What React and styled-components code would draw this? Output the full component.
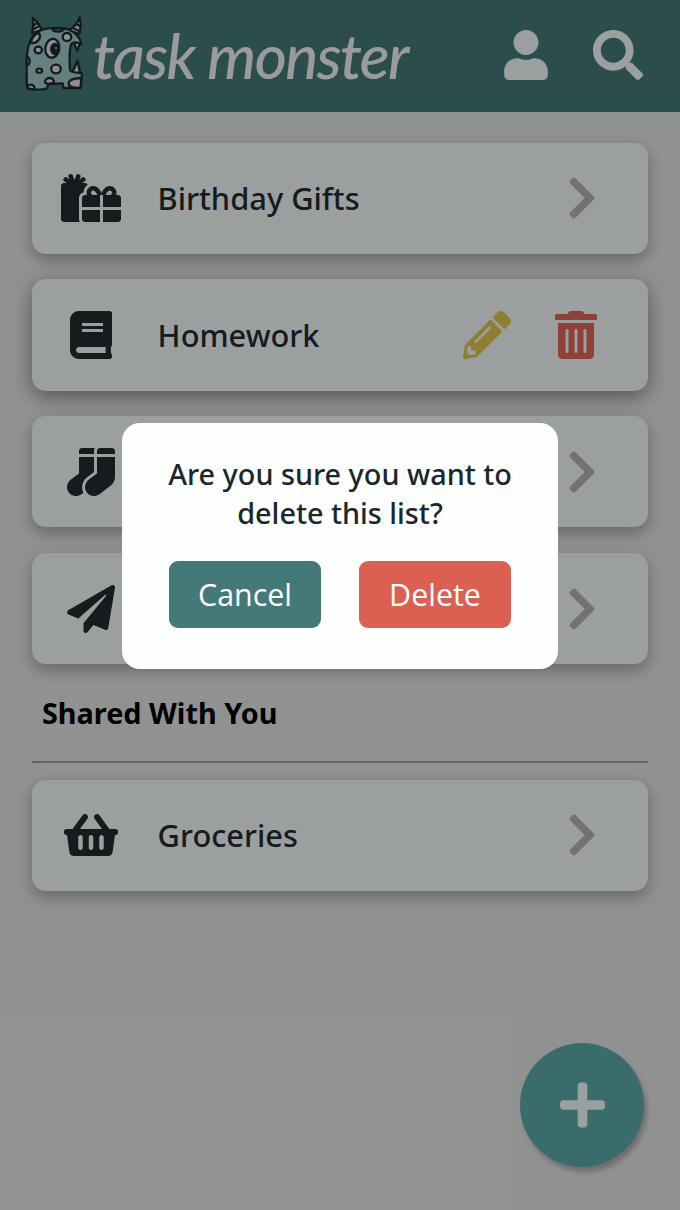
import React from "react";
import styled, { createGlobalStyle } from "styled-components";
import {
  FaUser, FaSearch, FaGifts, FaBook, FaSocks, FaPaperPlane,
  FaShoppingBasket, FaChevronRight, FaPencilAlt, FaTrashAlt, FaPlus,
} from "react-icons/fa";

const GlobalStyle = createGlobalStyle`
  * { box-sizing: border-box; }
  body {
    margin: 0;
    background: #dee1de;
    font-family: "Noto Sans", "Open Sans", sans-serif;
    color: #1f2b2e;
  }
`;

const Page = styled.div`
  position: relative;
  height: 1210px;
  overflow: hidden;
  background: #dee0df;
`;

const Header = styled.header`
  display: flex;
  align-items: center;
  height: 112px;
  padding: 0 37px 2px 24px;
  background: #437977;
  color: #eef4f5;
`;

const Brand = styled.div`
  display: flex;
  align-items: center;
  flex: 1;
  gap: 9px;
`;

const Wordmark = styled.span`
  font: italic 500 62px/70px "Lato", sans-serif;
  letter-spacing: -1.6px;
  color: #eeeeee;
  white-space: nowrap;
`;

const HeaderActions = styled.nav`
  display: flex;
  align-items: center;
  gap: 45px;
`;

const Glyph = styled.span`
  display: flex;
  flex: none;
  color: ${(p) => p.$color || "inherit"};
  svg {
    display: block;
    height: ${(p) => p.$size || 48}px;
    width: ${(p) => p.$width || 48}px;
  }
`;

const Lists = styled.main`
  display: flex;
  flex-direction: column;
  gap: 25.4px;
  padding: 30.5px 32px 0;
`;

const Card = styled.article`
  display: flex;
  align-items: center;
  height: 111.4px;
  border-radius: 14px;
  background: #eef5f5;
  padding-right: 51px;
  box-shadow: ${(p) => (p.$active
    ? "0 6px 20px rgba(0, 0, 0, 0.42)"
    : "0 6px 16px rgba(0, 0, 0, 0.3)")};
`;

const CardIcon = styled.div`
  display: flex;
  justify-content: center;
  width: 118px;
`;

const CardTitle = styled.h2`
  flex: 1;
  margin: 0 0 0 7.6px;
  font-size: 30.8px;
  font-weight: 530;
  line-height: 40px;
`;

const CardActions = styled.div`
  display: flex;
  align-items: center;
  gap: 44px;
`;

const SectionTitle = styled.h3`
  margin: 29px 42px 28px;
  font-size: 28.8px;
  line-height: 40px;
  font-weight: 700;
  color: #000;
`;

const Divider = styled.hr`
  margin: 0 32px;
  height: 3px;
  border: 0;
  border-top: 2px solid #9a9d9c;
  border-left: 1px solid #9a9d9c;
`;

const SharedLists = styled(Lists)`
  padding-top: 15.4px;
`;

const AddButton = styled.button`
  position: absolute;
  right: 36px;
  bottom: 43px;
  display: flex;
  align-items: center;
  justify-content: center;
  width: 124px;
  height: 124px;
  padding: 0;
  border: 0;
  border-radius: 50%;
  background: #58a6a5;
  color: #eef4f5;
  box-shadow: 3px 5px 5px #b0a8ab;
`;

const Backdrop = styled.div`
  position: absolute;
  inset: 0;
  display: flex;
  justify-content: center;
  align-items: flex-start;
  padding-top: 423px;
  background: rgba(0, 0, 0, 0.35);
`;

const Dialog = styled.section`
  width: 436px;
  height: 246px;
  padding: 31px 47px 40px;
  border-radius: 18px;
  background: #fdfefe;
  text-align: center;
`;

const Question = styled.p`
  margin: 0 -10px 29px;
  font-size: 28.8px;
  font-weight: 530;
  line-height: 39px;
  color: #1c272b;
`;

const DialogActions = styled.div`
  display: flex;
  justify-content: space-between;
`;

const DialogButton = styled.button`
  width: 152px;
  height: 67px;
  padding: 0;
  border: 0;
  border-radius: 9px;
  background: ${(p) => (p.$danger ? "#dc6052" : "#437977")};
  color: #fdfefe;
  font: 400 30.4px/40px "Open Sans", "Noto Sans", sans-serif;
`;

const Monster = () => (
  <svg width="60" height="78" viewBox="0 0 60 78" stroke="#1d2a2e" strokeWidth="2.3" strokeLinejoin="round" strokeLinecap="round">
    <path d="M7.700 17C10 12 9 6 8.700 2 12 5 16 8 17.300 14ZM44.500 14C51 11 54 6 55.700 1.300 57 7 57 12 55.300 18Z" fill="#dcdcdc" />
    <path d="m10 9 3-2M10 13l5-3M49 12l6 3M52 8l4 2" fill="none" />
    <path d="M50 27l3.300 8 2.400-7M48.500 56l5.200-11.300L56 57" fill="#dcdcdc" />
    <path d="M4.300 72.700C3 72 2.700 70 2.700 67V44C3 36 4 30 6 25.700 8 19 13 15 19.300 13.300 24 11.700 38 11.500 44.300 13.300 50 16 56 20 57.300 28 53 26 47 25 46.700 30 45 38 45.500 47 46 54 47 57 52 56 58 57.300L56.700 72H39.300L38.700 67.300 24 68 23.300 72.300C18 74 9 74 4.300 72.700Z" fill="#9cc5c2" />
    <g fill="#dcdcdc">
      <path d="M7 27C8 21 11 18 15 17 18 22 13 28 7 27ZM28 12.500h12c-1 4-11 4-12 0ZM57.300 62l-.7 9.500c-6 1-12-.5-12-4 0-3.500 6-5.500 12.700-5.500ZM2.700 40.500c4 1 4 8 0 9ZM3.500 69.500c4-2 8 0 6.500 3.800l-6-.8ZM21 66.500c0-6 9-6 9 0l-6 1.500Z" />
      <ellipse cx="43" cy="21" rx="4.300" ry="4" />
      <ellipse cx="14.300" cy="34" rx="3.700" ry="3.300" />
      <ellipse cx="15.300" cy="54.700" rx="2.800" ry="2" />
      <ellipse cx="32" cy="53" rx="4.800" ry="4.300" />
      <ellipse cx="28.300" cy="32.300" rx="7" ry="9.500" transform="rotate(8 28.300 32.300)" />
    </g>
    <ellipse cx="31" cy="33" rx="3.800" ry="5" fill="#1d2a2e" />
    <circle cx="32" cy="32" r="1.100" fill="#9cc5c2" stroke="none" />
  </svg>
);

const ListCard = ({ icon: Icon, iconWidth, title, active }) => (
  <Card $active={active}>
    <CardIcon><Glyph $width={iconWidth}><Icon /></Glyph></CardIcon>
    <CardTitle>{title}</CardTitle>
    {active ? (
      <CardActions>
        <Glyph $color="#dac04d"><FaPencilAlt /></Glyph>
        <Glyph $width={42} $color="#d96456"><FaTrashAlt /></Glyph>
      </CardActions>
    ) : (
      <Glyph $width={30} $color="#b4aeb1"><FaChevronRight /></Glyph>
    )}
  </Card>
);

export default function App() {
  return (
    <Page>
      <GlobalStyle />
      <Header>
        <Brand>
          <Monster />
          <Wordmark>task monster</Wordmark>
        </Brand>
        <HeaderActions>
          <Glyph $size={50} $width={44}><FaUser /></Glyph>
          <Glyph $size={50} $width={50}><FaSearch /></Glyph>
        </HeaderActions>
      </Header>
      <Lists>
        <ListCard icon={FaGifts} iconWidth={60} title="Birthday Gifts" />
        <ListCard icon={FaBook} iconWidth={42} title="Homework" active />
        <ListCard icon={FaSocks} title="" />
        <ListCard icon={FaPaperPlane} title="" />
      </Lists>
      <SectionTitle>Shared With You</SectionTitle>
      <Divider />
      <SharedLists as="section">
        <ListCard icon={FaShoppingBasket} iconWidth={54} title="Groceries" />
      </SharedLists>
      <AddButton aria-label="Add list"><Glyph $size={52} $width={45}><FaPlus /></Glyph></AddButton>
      <Backdrop>
        <Dialog role="dialog">
          <Question>Are you sure you want to delete this list?</Question>
          <DialogActions>
            <DialogButton>Cancel</DialogButton>
            <DialogButton $danger>Delete</DialogButton>
          </DialogActions>
        </Dialog>
      </Backdrop>
    </Page>
  );
}
